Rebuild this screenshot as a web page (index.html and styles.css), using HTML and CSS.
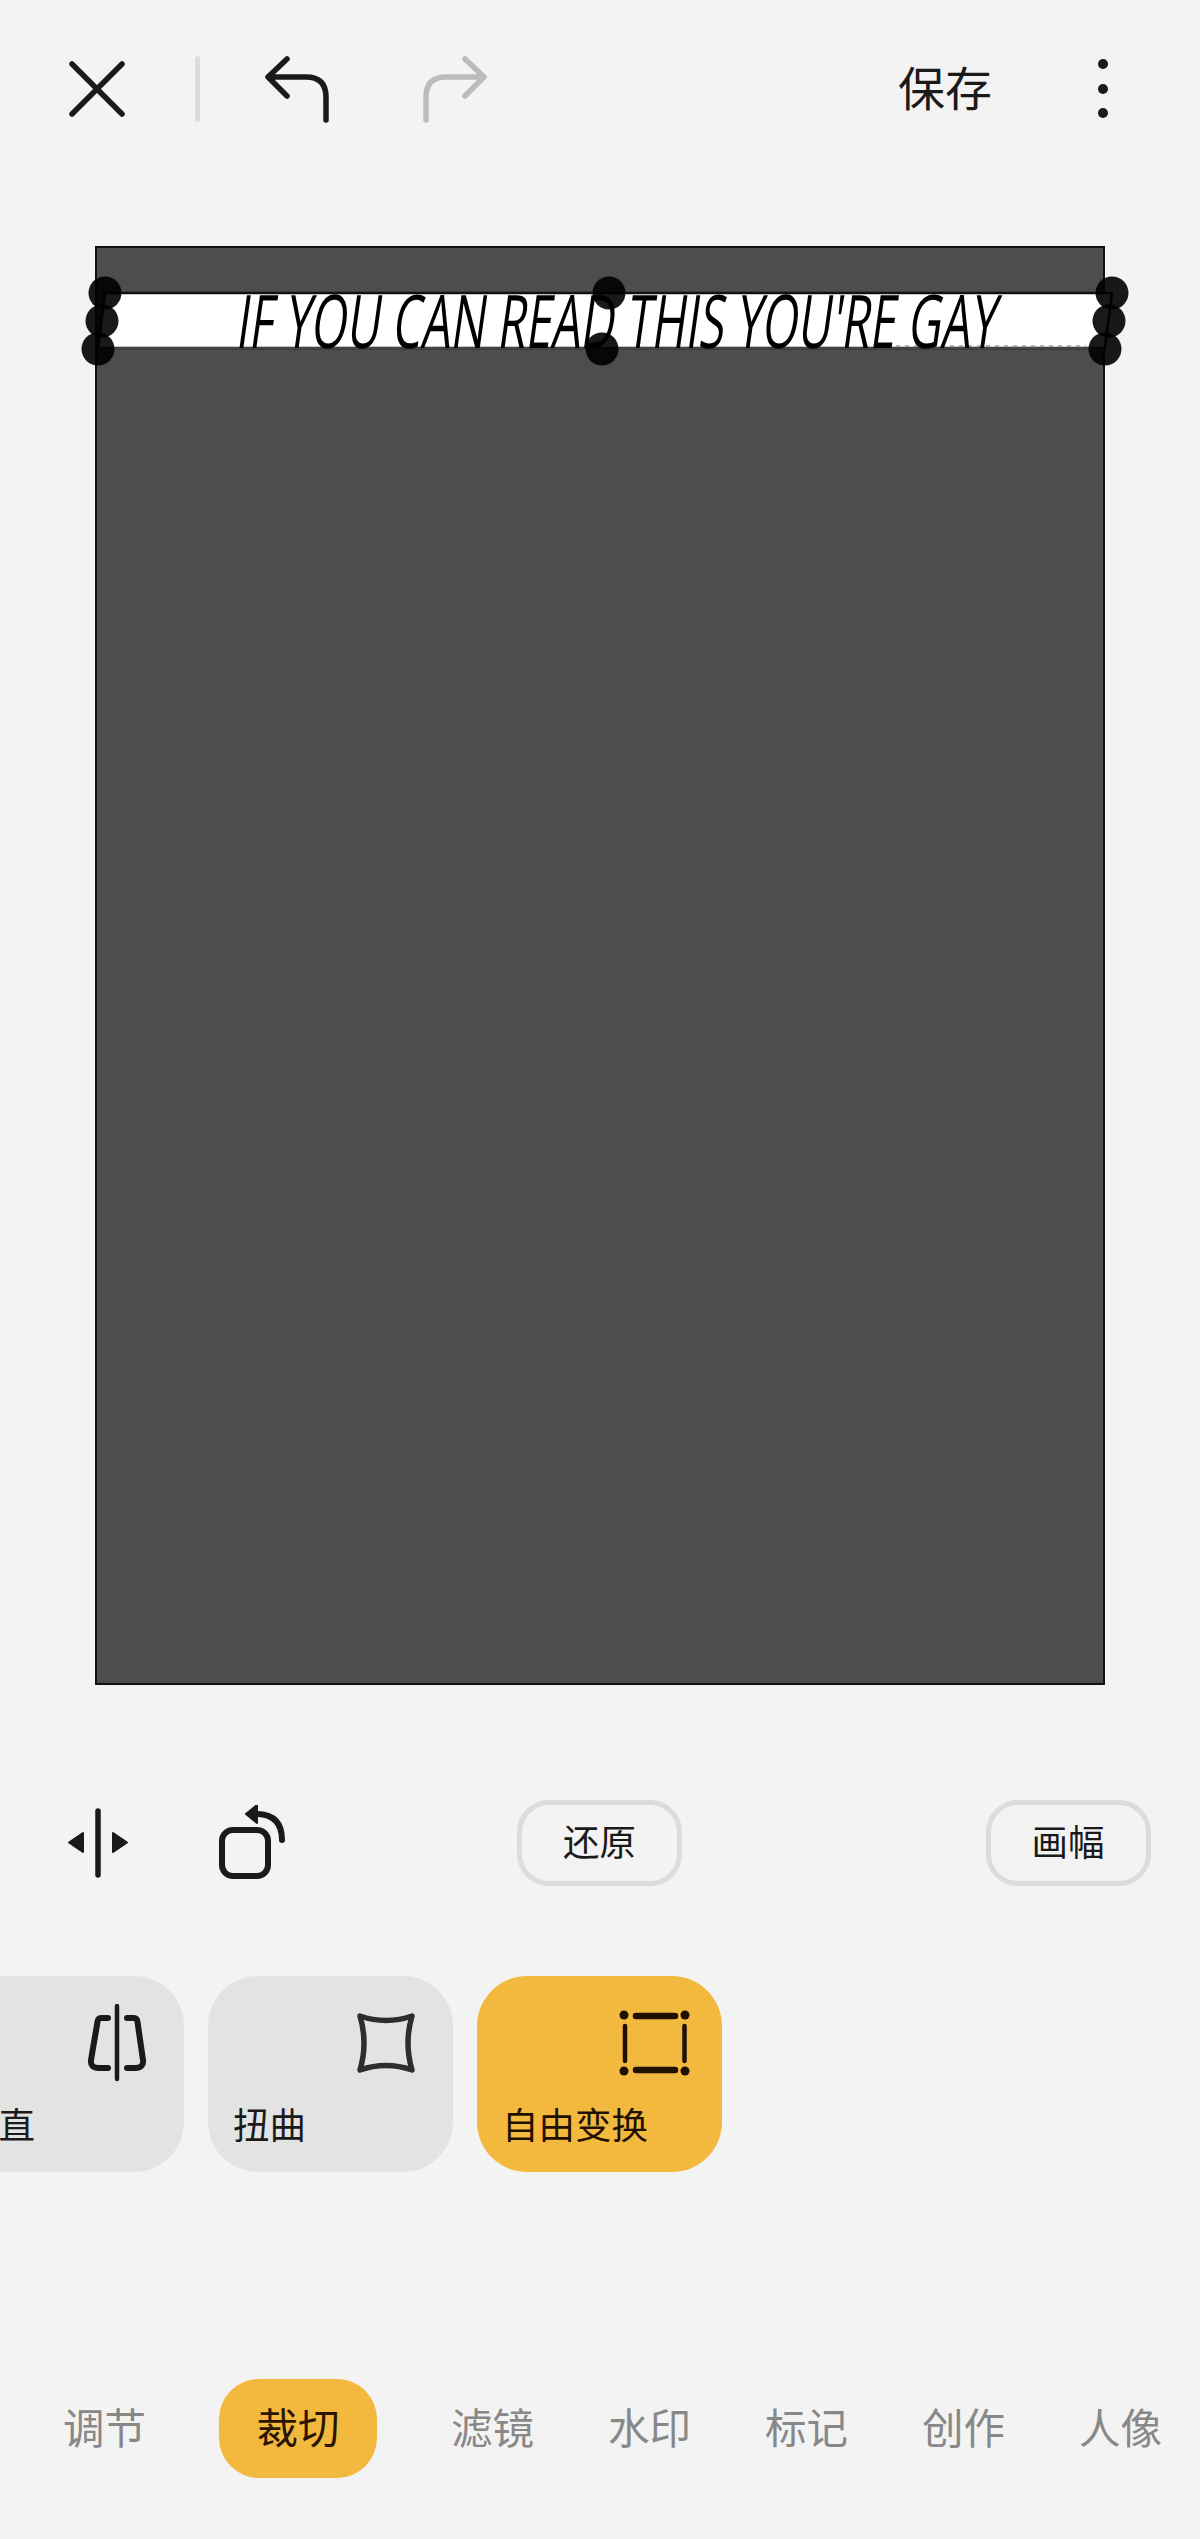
FILE: index.html
```html
<!DOCTYPE html>
<html lang="zh-CN">
<head>
<meta charset="utf-8">
<title>裁切</title>
<link rel="stylesheet" href="styles.css">
</head>
<body>
<div class="page">
  <header class="topbar">
    <svg class="ic-close" width="60" height="60" viewBox="0 0 60 60"><path class="s-dark" d="M5 5 L55 55 M55 5 L5 55"/></svg>
    <span class="divider"></span>
    <svg class="ic-undo" width="68" height="68" viewBox="0 0 68 68"><path class="s-dark" d="M24 4 L5 22 L24 41 M5 22 H43 Q63 22 63 42 V65"/></svg>
    <svg class="ic-redo" width="68" height="68" viewBox="0 0 68 68"><path class="s-muted" d="M44 4 L63 22 L44 41 M63 22 H25 Q5 22 5 42 V65"/></svg>
    <span class="save">保存</span>
    <svg class="ic-more" width="24" height="66" viewBox="0 0 24 66"><circle cx="12" cy="8" r="5"/><circle cx="12" cy="33" r="5"/><circle cx="12" cy="57" r="5"/></svg>
  </header>

  <main class="canvas">
    <svg class="band" width="1008" height="1438" viewBox="0 0 1008 1438">
      <polygon class="band-fill" points="9,47 1016,47 1009,102 2,102"/>
      <line class="band-bottom" x1="2" y1="102" x2="1006" y2="102"/>
      <line class="band-noise" x1="800" y1="100" x2="990" y2="100"/>
    </svg>
    <div class="meme">IF YOU CAN READ THIS YOU'RE GAY</div>
    <svg class="handles" width="1008" height="1438" viewBox="0 0 1008 1438">
      <circle cx="9" cy="47" r="16.5"/><circle cx="6" cy="75" r="16.5"/><circle cx="2" cy="103" r="16.5"/>
      <circle cx="513" cy="47" r="16.5"/><circle cx="506" cy="103" r="16.5"/>
      <circle cx="1016" cy="47" r="16.5"/><circle cx="1013" cy="75" r="16.5"/><circle cx="1009" cy="103" r="16.5"/>
    </svg>
  </main>

  <section class="tools">
    <svg class="ic-flip" width="64" height="70" viewBox="0 0 64 70"><path class="s-dark" d="M32 3 V67"/><path class="f-dark" d="M17 25 V44 L3 34.5 Z M47 25 V44 L61 34.5 Z"/></svg>
    <svg class="ic-rotate" width="68" height="76" viewBox="0 0 68 76"><rect class="s-dark s-6" x="4" y="25" width="46" height="46" rx="11"/><path class="s-dark s-6" d="M64 35 Q64 10 40 9"/><path class="f-dark" d="M28 9 L39 0 V18 Z"/></svg>
    <button class="pill-btn restore">还原</button>
    <button class="pill-btn ratio">画幅</button>
  </section>

  <section class="cards">
    <div class="card">
      <svg width="80" height="80" viewBox="0 0 80 80"><path class="s-dark s-thin" d="M40 3 V76"/><path class="s-dark s-6" d="M31 15 H24 Q21 15 20.5 19 L14 57 Q13 65 22 65 H31 M50 15 H57 Q60 15 60.5 19 L66 57 Q67 65 58 65 H50"/></svg>
      <span class="card-label label-cut">垂直</span>
    </div>
    <div class="card">
      <svg width="80" height="80" viewBox="0 0 80 80"><path class="s-soft" d="M14 13 Q40 22 66 13 Q58 40 66 67 Q40 58 14 67 Q22 40 14 13 Z"/></svg>
      <span class="card-label">扭曲</span>
    </div>
    <div class="card card-active">
      <svg width="80" height="80" viewBox="0 0 80 80"><path class="s-dark s-brown s-bar" d="M21 13 H60 M21 67 H60"/><path class="s-dark s-brown s-thin" d="M10 23 V58 M69.500 23 V58"/><g class="f-brown"><circle cx="9" cy="12" r="4.500"/><circle cx="70" cy="12" r="4.500"/><circle cx="9" cy="68" r="4.500"/><circle cx="70" cy="68" r="4.500"/></g></svg>
      <span class="card-label">自由变换</span>
    </div>
  </section>

  <nav class="nav">
    <span class="nav-item">调节</span>
    <span class="nav-item nav-active">裁切</span>
    <span class="nav-item">滤镜</span>
    <span class="nav-item">水印</span>
    <span class="nav-item">标记</span>
    <span class="nav-item">创作</span>
    <span class="nav-item">人像</span>
  </nav>
</div>
</body>
</html>
```
FILE: styles.css
```css
* { box-sizing: border-box; }
html, body { margin: 0; padding: 0; }
body {
  background: #f3f3f3;
  color: #1a1a1a;
  font-family: "Noto Sans CJK SC", "Noto Sans", sans-serif;
  overflow: hidden;
}
.page { width: 1200px; height: 2539px; overflow: hidden; }

.s-dark, .s-muted, .s-soft { fill: none; stroke-linecap: round; stroke-linejoin: round; stroke-width: 5.5px; }
.s-dark { stroke: #1a1a1a; }
.s-muted { stroke: #bcbcbc; }
.s-soft { stroke: #2e2e2e; }
.s-6 { stroke-width: 6px; }
.s-thin { stroke-width: 4.5px; }
.s-bar { stroke-width: 6.5px; }
.s-brown { stroke: #1f1000; }
.f-dark { fill: #1a1a1a; stroke: #1a1a1a; stroke-width: 2px; stroke-linejoin: round; }
.f-brown { fill: #1f1000; }

.topbar { display: flex; align-items: center; height: 178px; padding-left: 67px; }
.divider { width: 5px; height: 66px; margin-left: 68px; border-radius: 3px; background: #dcdcdc; }
.ic-undo { margin-left: 63px; }
.ic-redo { margin-left: 90px; }
.save { width: 94px; margin: -6px 0 0 409px; font-size: 47px; line-height: 60px; white-space: nowrap; }
.ic-more { margin-left: 99px; fill: #1a1a1a; }

.canvas {
  position: relative;
  width: 1010px;
  height: 1439px;
  margin: 68px 0 0 95px;
  border: 2.500px solid #111;
  background: #4d4d4d;
}
.band, .handles { position: absolute; left: -1px; top: -2px; overflow: visible; }
.band-fill { fill: #fff; stroke: #111; stroke-width: 2.500px; }
.band-bottom { stroke: #444; stroke-width: 2px; }
.band-noise { stroke: #999; stroke-width: 1.500px; stroke-dasharray: 4 5; }
.handles circle { fill: rgba(0, 0, 0, .9); }
.meme {
  position: absolute;
  left: 138px;
  top: 44px;
  width: 768px;
  height: 56px;
  color: #000;
  font-family: "Open Sans", sans-serif;
  font-size: 74px;
  font-weight: 500;
  line-height: 56px;
  white-space: nowrap;
  transform-origin: 0 100%;
  transform: skewX(-8deg) scaleX(.624);
}

.tools { display: flex; align-items: center; height: 86px; margin-top: 115px; padding-left: 66px; }
.ic-rotate { margin-left: 88px; }
.pill-btn {
  width: 165px;
  height: 86px;
  padding: 0 0 5px;
  border: 5px solid #dcdcdc;
  border-radius: 32px;
  background: transparent;
  color: #1a1a1a;
  font-family: inherit;
  font-size: 36.5px;
  line-height: 48px;
}
.restore { margin-left: 231px; }
.ratio { margin-left: 303.5px; }

.cards { display: flex; gap: 24px; height: 196px; margin: 90px 0 0 -61px; }
.card {
  display: flex;
  flex-direction: column;
  flex: none;
  width: 245px;
  height: 196px;
  padding: 27px 27px 0 25px;
  border-radius: 50px;
  background: #e3e3e3;
}
.card svg { align-self: flex-end; }
.card-active { background: #f3b93f; color: #1f1000; }
.card-label { margin-top: 17px; font-size: 36.5px; line-height: 48px; white-space: nowrap; }
.label-cut { margin-left: -2px; }

.nav { display: flex; align-items: center; height: 99px; margin-top: 207px; padding-left: 63px; gap: 75px; }
.nav-item { flex: none; width: 82px; margin-top: -5px; font-size: 41.5px; line-height: 56px; color: #888; text-align: center; white-space: nowrap; }
.nav-active {
  width: 158px;
  height: 99px;
  margin: 0 -1px;
  padding-bottom: 5px;
  border-radius: 40px;
  background: #f3b93f;
  color: #2a1600;
  line-height: 94px;
}
```
